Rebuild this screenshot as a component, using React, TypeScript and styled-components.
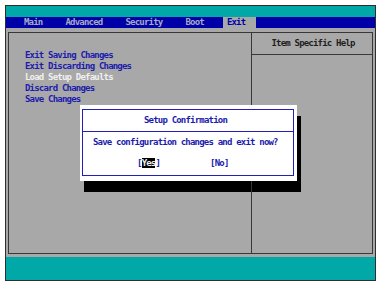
import { FC } from 'react';
import styled, { createGlobalStyle } from 'styled-components';

const GlobalStyle = createGlobalStyle`
  html, body {
    margin: 0;
    padding: 0;
    background: #ffffff;
  }
  body {
    font-family: 'DejaVu Sans Mono', 'Liberation Mono', monospace;
    font-size: 9px;
    font-weight: bold;
    letter-spacing: -0.8px;
  }
`;

const BLUE = '#0000a8';
const GRAY = '#a8a8a8';
const TEAL = '#00a8a8';
const LINE = '#383838';

const Frame = styled.div`
  margin: 5px 0 0 5px;
  width: 371px;
  height: 276px;
  box-sizing: border-box;
  border: 1px solid #2e2e2e;
  display: flex;
  flex-direction: column;
  background: ${GRAY};
`;

const TitleBand = styled.div`
  height: 11px;
  background: ${TEAL};
`;

const MenuBar = styled.div`
  height: 11px;
  background: ${BLUE};
  display: flex;
  gap: 8px;
  padding-left: 14px;
`;

const Tab = styled.div<{ $active?: boolean }>`
  padding: 0 11px 0 4px;
  line-height: 11px;
  color: ${(p) => (p.$active ? BLUE : '#a8a8c4')};
  background: ${(p) => (p.$active ? GRAY : 'transparent')};
  white-space: pre;
`;

const Body = styled.div`
  flex: 1;
  padding: 4px 2px 3px 2px;
  display: flex;
`;

const Panel = styled.div`
  position: relative;
  flex: 1;
  border: 1px solid ${LINE};
  display: grid;
  grid-template-columns: 243px 1fr;
`;

const ItemList = styled.div`
  position: relative;
  z-index: 1;
  padding: 17px 0 0 16px;
  border-right: 1px solid ${LINE};
`;

const Item = styled.div<{ $selected?: boolean }>`
  line-height: 11px;
  color: ${(p) => (p.$selected ? '#f0f0f0' : '#1c1cac')};
  white-space: pre;
`;

const HelpColumn = styled.div`
  display: flex;
  flex-direction: column;
`;

const HelpHeader = styled.div`
  height: 21px;
  line-height: 21px;
  text-align: center;
  color: #1e1e1e;
  border-bottom: 1px solid ${LINE};
  padding-left: 2px;
`;

const StatusBand = styled.div`
  height: 23px;
  background: ${TEAL};
`;

/* the drop shadow sits under the column divider, the dialog over it */
const Shadow = styled.div`
  position: absolute;
  left: 75px;
  top: 83px;
  width: 217px;
  height: 76px;
  background: #000000;
`;

const Dialog = styled.div`
  position: absolute;
  z-index: 2;
  left: 71px;
  top: 72px;
  width: 217px;
  height: 76px;
  box-sizing: border-box;
  background: #ffffff;
  padding: 4px 3px 5px 2px;
  display: flex;
`;

const DialogBox = styled.div`
  flex: 1;
  border: 1px solid #2020b8;
  color: #1c1cac;
  display: flex;
  flex-direction: column;
`;

const DialogTitle = styled.div`
  height: 21px;
  line-height: 21px;
  text-align: center;
  padding-right: 5px;
  border-bottom: 1px solid #2020b8;
`;

const Message = styled.div`
  line-height: 11px;
  padding: 5px 0 0 10px;
  white-space: pre;
`;

const Buttons = styled.div`
  display: flex;
  gap: 50px;
  padding: 10px 0 0 54px;
  line-height: 11px;
`;

const Choice = styled.span`
  white-space: pre;
`;

const Focus = styled.span`
  background: #000000;
  color: #f0f0f0;
`;

const tabs = ['Main', 'Advanced', 'Security', 'Boot', 'Exit'];
const items = [
  'Exit Saving Changes',
  'Exit Discarding Changes',
  'Load Setup Defaults',
  'Discard Changes',
  'Save Changes',
];

const App: FC = () => (
  <>
    <GlobalStyle />
    <Frame>
      <TitleBand />
      <MenuBar>
        {tabs.map((t) => (
          <Tab key={t} $active={t === 'Exit'}>
            {t}
          </Tab>
        ))}
      </MenuBar>
      <Body>
        <Panel>
          <Shadow />
          <ItemList>
            {items.map((i) => (
              <Item key={i} $selected={i === 'Load Setup Defaults'}>
                {i}
              </Item>
            ))}
          </ItemList>
          <HelpColumn>
            <HelpHeader>Item Specific Help</HelpHeader>
          </HelpColumn>
          <Dialog>
            <DialogBox>
              <DialogTitle>Setup Confirmation</DialogTitle>
              <Message>Save configuration changes and exit now?</Message>
              <Buttons>
                <Choice>
                  [<Focus>Yes</Focus>]
                </Choice>
                <Choice>[No]</Choice>
              </Buttons>
            </DialogBox>
          </Dialog>
        </Panel>
      </Body>
      <StatusBand />
    </Frame>
  </>
);

export default App;
